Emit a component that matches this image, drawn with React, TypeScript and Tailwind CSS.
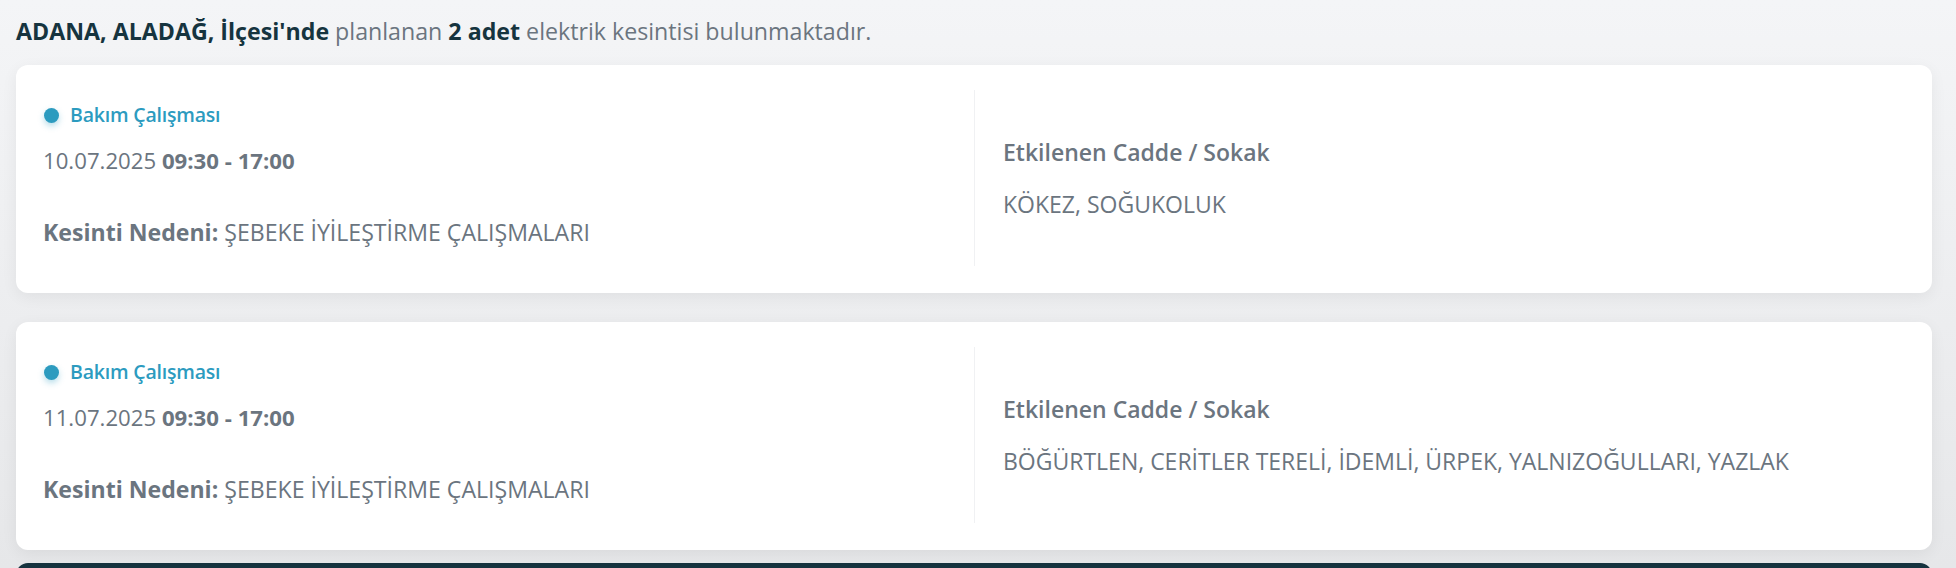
import React from "react";

type Item = { date: string; time: string; reason: string; streets: string };

const items: Item[] = [
  { date: "10.07.2025", time: "09:30 - 17:00", reason: "ŞEBEKE İYİLEŞTİRME ÇALIŞMALARI", streets: "KÖKEZ, SOĞUKOLUK" },
  { date: "11.07.2025", time: "09:30 - 17:00", reason: "ŞEBEKE İYİLEŞTİRME ÇALIŞMALARI", streets: "BÖĞÜRTLEN, CERİTLER TERELİ, İDEMLİ, ÜRPEK, YALNIZOĞULLARI, YAZLAK" },
];

function Card({ item }: { item: Item }) {
  return (
    <div className="grid grid-cols-2 rounded-xl bg-white pt-[25px] pb-[27px] shadow-[0_4px_16px_rgba(0,0,0,0.06)]">
      <div className="flex flex-col px-[27px] pt-[13px] pb-[20px]">
        <div className="flex items-center gap-[11px] text-[19.5px] leading-[24px] font-semibold tracking-[-0.2px] text-[#2c9bbf]">
          <span className="ml-[1px] h-[15px] w-[15px] shrink-0 rounded-full bg-[#2c9bbf] shadow-[0_3px_6px_rgba(44,155,191,0.35)]" />
          <span>Bakım Çalışması</span>
        </div>
        <div className="mt-[20px] text-[22.2px] leading-[28px] text-[#6b757f]">
          {item.date} <span className="font-bold">{item.time}</span>
        </div>
        <div className="mt-[43px] text-[23.1px] leading-[28px] text-[#6b757f]">
          <span className="font-bold">Kesinti Nedeni:</span> {item.reason}
        </div>
      </div>
      <div className="flex flex-col justify-center border-l border-[#f0f1f3] pl-[28px]">
        <div className="text-[23px] leading-[28px] font-semibold text-[#6b757f]">Etkilenen Cadde / Sokak</div>
        <div className="mt-[24px] text-[23px] leading-[28px] text-[#6b757f]">{item.streets}</div>
      </div>
    </div>
  );
}

export default function App() {
  return (
    <div
      className="h-screen overflow-hidden bg-[linear-gradient(to_bottom,#f4f5f7,#e6e7e9)] pl-4 pr-[24px] pt-[17px]"
      style={{ fontFamily: '"Open Sans", "Noto Sans", sans-serif' }}
    >
      <p className="text-[23.2px] leading-[28px] text-[#6b757f]">
        <span className="font-bold text-[#16343f]">ADANA, ALADAĞ, İlçesi'nde</span> planlanan{" "}
        <span className="font-bold text-[#16343f]">2 adet</span> elektrik kesintisi bulunmaktadır.
      </p>
      <div className="mt-[20px] flex flex-col gap-[29px]">
        {items.map((it, i) => (
          <Card key={i} item={it} />
        ))}
      </div>
      <div className="mt-[13px] h-[40px] rounded-t-xl bg-[#16333f]" />
    </div>
  );
}
